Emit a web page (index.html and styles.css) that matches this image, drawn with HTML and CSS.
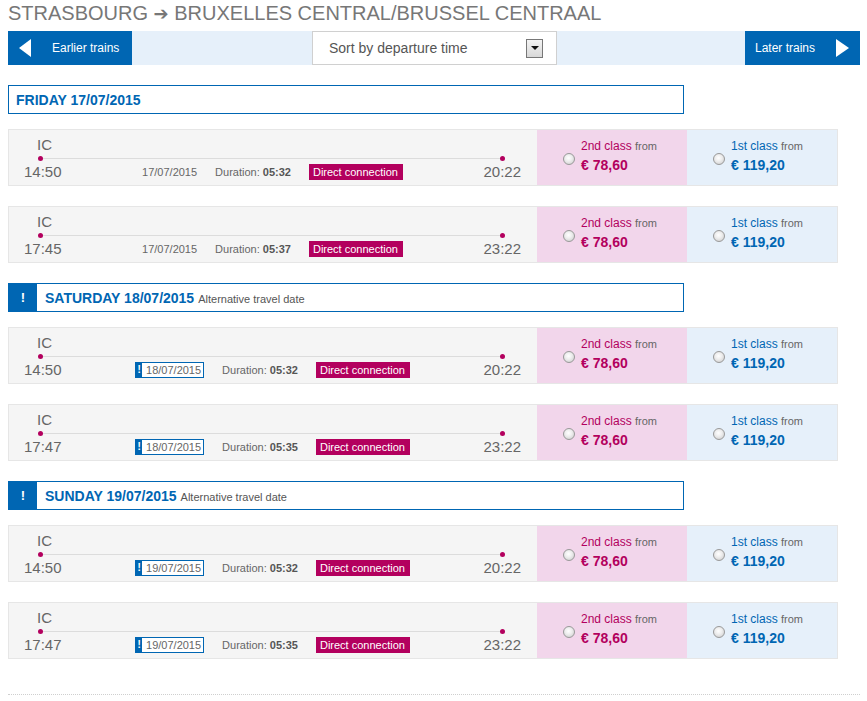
FILE: index.html
```html
<!DOCTYPE html>
<html>
<head>
<meta charset="utf-8">
<link rel="stylesheet" href="styles.css">
</head>
<body>
<div class="page">
  <h1 class="title">STRASBOURG <span class="arrow">➔</span> BRUXELLES CENTRAL/BRUSSEL CENTRAAL</h1>
  <div class="nav">
    <div class="navbtn prev"><span class="tri-left"></span><span>Earlier trains</span></div>
    <div class="navmid">
      <div class="select"><span>Sort by departure time</span><span class="dd"><span class="dd-tri"></span></span></div>
    </div>
    <div class="navbtn next"><span>Later trains</span><span class="tri-right"></span></div>
  </div>

  <div class="day"><span class="dayname">FRIDAY 17/07/2015</span></div>

  <div class="trip">
    <div class="leg">
      <div class="train">IC</div>
      <div class="track"><span class="dot"></span><span class="line"></span><span class="dot"></span></div>
      <div class="times">
        <span class="time">14:50</span>
        <div class="info"><span class="date">17/07/2015</span><span class="dur">Duration: <b>05:32</b></span><span class="direct">Direct connection</span></div>
        <span class="time end">20:22</span>
      </div>
    </div>
    <div class="price second"><span class="radio"></span><div><div class="cls">2nd class <span class="from">from</span></div><div class="amt">€ 78,60</div></div></div>
    <div class="price first"><span class="radio"></span><div><div class="cls">1st class <span class="from">from</span></div><div class="amt">€ 119,20</div></div></div>
  </div>

  <div class="trip">
    <div class="leg">
      <div class="train">IC</div>
      <div class="track"><span class="dot"></span><span class="line"></span><span class="dot"></span></div>
      <div class="times">
        <span class="time">17:45</span>
        <div class="info"><span class="date">17/07/2015</span><span class="dur">Duration: <b>05:37</b></span><span class="direct">Direct connection</span></div>
        <span class="time end">23:22</span>
      </div>
    </div>
    <div class="price second"><span class="radio"></span><div><div class="cls">2nd class <span class="from">from</span></div><div class="amt">€ 78,60</div></div></div>
    <div class="price first"><span class="radio"></span><div><div class="cls">1st class <span class="from">from</span></div><div class="amt">€ 119,20</div></div></div>
  </div>

  <div class="day alt"><span class="bang">!</span><span class="dayname">SATURDAY 18/07/2015</span><span class="altnote">Alternative travel date</span></div>

  <div class="trip">
    <div class="leg">
      <div class="train">IC</div>
      <div class="track"><span class="dot"></span><span class="line"></span><span class="dot"></span></div>
      <div class="times">
        <span class="time">14:50</span>
        <div class="info"><span class="date altdate"><span class="excl">!</span><span class="dtxt">18/07/2015</span></span><span class="dur">Duration: <b>05:32</b></span><span class="direct">Direct connection</span></div>
        <span class="time end">20:22</span>
      </div>
    </div>
    <div class="price second"><span class="radio"></span><div><div class="cls">2nd class <span class="from">from</span></div><div class="amt">€ 78,60</div></div></div>
    <div class="price first"><span class="radio"></span><div><div class="cls">1st class <span class="from">from</span></div><div class="amt">€ 119,20</div></div></div>
  </div>

  <div class="trip">
    <div class="leg">
      <div class="train">IC</div>
      <div class="track"><span class="dot"></span><span class="line"></span><span class="dot"></span></div>
      <div class="times">
        <span class="time">17:47</span>
        <div class="info"><span class="date altdate"><span class="excl">!</span><span class="dtxt">18/07/2015</span></span><span class="dur">Duration: <b>05:35</b></span><span class="direct">Direct connection</span></div>
        <span class="time end">23:22</span>
      </div>
    </div>
    <div class="price second"><span class="radio"></span><div><div class="cls">2nd class <span class="from">from</span></div><div class="amt">€ 78,60</div></div></div>
    <div class="price first"><span class="radio"></span><div><div class="cls">1st class <span class="from">from</span></div><div class="amt">€ 119,20</div></div></div>
  </div>

  <div class="day alt"><span class="bang">!</span><span class="dayname">SUNDAY 19/07/2015</span><span class="altnote">Alternative travel date</span></div>

  <div class="trip">
    <div class="leg">
      <div class="train">IC</div>
      <div class="track"><span class="dot"></span><span class="line"></span><span class="dot"></span></div>
      <div class="times">
        <span class="time">14:50</span>
        <div class="info"><span class="date altdate"><span class="excl">!</span><span class="dtxt">19/07/2015</span></span><span class="dur">Duration: <b>05:32</b></span><span class="direct">Direct connection</span></div>
        <span class="time end">20:22</span>
      </div>
    </div>
    <div class="price second"><span class="radio"></span><div><div class="cls">2nd class <span class="from">from</span></div><div class="amt">€ 78,60</div></div></div>
    <div class="price first"><span class="radio"></span><div><div class="cls">1st class <span class="from">from</span></div><div class="amt">€ 119,20</div></div></div>
  </div>

  <div class="trip">
    <div class="leg">
      <div class="train">IC</div>
      <div class="track"><span class="dot"></span><span class="line"></span><span class="dot"></span></div>
      <div class="times">
        <span class="time">17:47</span>
        <div class="info"><span class="date altdate"><span class="excl">!</span><span class="dtxt">19/07/2015</span></span><span class="dur">Duration: <b>05:35</b></span><span class="direct">Direct connection</span></div>
        <span class="time end">23:22</span>
      </div>
    </div>
    <div class="price second"><span class="radio"></span><div><div class="cls">2nd class <span class="from">from</span></div><div class="amt">€ 78,60</div></div></div>
    <div class="price first"><span class="radio"></span><div><div class="cls">1st class <span class="from">from</span></div><div class="amt">€ 119,20</div></div></div>
  </div>

  <div class="footer-line"></div>
</div>
</body>
</html>
```

FILE: styles.css
```css
* { box-sizing: border-box; }
html, body { margin: 0; padding: 0; background: #fff; }
body { font-family: "Liberation Sans", Arial, sans-serif; color: #666; }
.page { padding: 0 0 0 8px; width: 867px; }

.title {
  margin: 0 0 4px 0;
  font-size: 20px;
  line-height: 26px;
  font-weight: normal;
  color: #777;
  white-space: nowrap;
}
.arrow { font-family: "DejaVu Sans", sans-serif; font-size: 18px; }

.nav {
  display: flex;
  width: 852px;
  height: 34px;
  background: #e6f0fa;
}
.navbtn {
  display: flex;
  align-items: center;
  background: #0066b3;
  color: #fff;
  font-size: 12px;
  height: 34px;
}
.prev { width: 124px; padding-left: 11px; }
.prev .tri-left { margin-right: 21px; }
.next { width: 115px; padding-left: 10px; }
.next .tri-right { margin-left: 21px; }
.tri-left {
  width: 0; height: 0;
  border-top: 9px solid transparent;
  border-bottom: 9px solid transparent;
  border-right: 12px solid #fff;
}
.tri-right {
  width: 0; height: 0;
  border-top: 9px solid transparent;
  border-bottom: 9px solid transparent;
  border-left: 13px solid #fff;
}
.navmid { flex: 1; }
.select {
  margin-left: 180px;
  width: 245px;
  height: 34px;
  background: #fff;
  border: 1px solid #d0d0d0;
  display: flex;
  align-items: center;
  justify-content: space-between;
  padding: 0 13px 0 16px;
  font-size: 14px;
  color: #555;
}
.dd {
  width: 17px; height: 19px;
  border: 1px solid #777;
  background: linear-gradient(#f4f4f4, #d8d8d8);
  display: flex;
  align-items: center;
  justify-content: center;
}
.dd-tri {
  width: 0; height: 0;
  border-left: 4px solid transparent;
  border-right: 4px solid transparent;
  border-top: 4px solid #111;
}

.day {
  margin-top: 20px;
  width: 676px;
  height: 29px;
  border: 1px solid #0066b3;
  display: flex;
  align-items: center;
  padding-left: 7px;
}
.dayname { font-size: 14px; font-weight: bold; color: #0066b3; }
.day.alt { padding-left: 0; }
.bang {
  width: 28px;
  align-self: stretch;
  background: #0066b3;
  color: #fff;
  font-weight: bold;
  font-size: 13px;
  display: flex;
  align-items: center;
  justify-content: center;
  margin-right: 8px;
}
.altnote { font-size: 11px; color: #555; margin-left: 4px; margin-top: 2px; }

.trip {
  margin-top: 20px;
  width: 830px;
  height: 57px;
  border: 1px solid #e6e6e6;
  display: flex;
}
.day + .trip { margin-top: 15px; }
.leg {
  width: 528px;
  background: #f5f5f5;
  padding: 6px 16px 4px 15px;
}
.train { font-size: 15px; line-height: 17px; margin-left: 13px; color: #666; }
.track {
  display: flex;
  align-items: center;
  height: 5px;
  margin: 3px 16px 0 14px;
}
.dot { width: 5px; height: 5px; border-radius: 50%; background: #b3005e; }
.line { flex: 1; height: 1px; background: #dcdcdc; }
.times {
  margin-top: 2px;
  display: grid;
  grid-template-columns: 1fr auto 1fr;
  align-items: center;
  height: 18px;
}
.time { font-size: 15px; line-height: 18px; color: #666; }
.time.end { justify-self: end; }
.info {
  display: flex;
  align-items: center;
  gap: 18px;
  font-size: 11px;
  color: #666;
}
.dur b { color: #555; }
.direct {
  background: #b3005e;
  color: #fff;
  font-size: 11px;
  line-height: 16px;
  height: 16px;
  padding: 0 5px 0 4px;
}
.altdate {
  display: flex;
  height: 16px;
  line-height: 14px;
  border: 1px solid #0066b3;
  background: #fff;
}
.excl {
  width: 6px;
  background: #0066b3;
  color: #fff;
  font-weight: bold;
  font-size: 10px;
  text-align: center;
}
.dtxt { padding: 0 2px 0 4px; }

.price {
  display: flex;
  align-items: flex-start;
  padding: 9px 0 0 26px;
}
.price.second { width: 150px; background: #f2d6eb; color: #b3005e; }
.price.first { width: 150px; background: #e6f0fa; color: #0066b3; }
.radio {
  width: 12px; height: 12px;
  margin: 14px 6px 0 0;
  border-radius: 50%;
  border: 1px solid #999;
  background: radial-gradient(circle at 45% 40%, #fff 0%, #eee 40%, #c8c8c8 100%);
  flex: none;
}
.cls { font-size: 12px; line-height: 14px; }
.from { font-size: 11px; color: #666; }
.amt { font-size: 14px; line-height: 16px; font-weight: bold; margin-top: 4px; }

.footer-line {
  margin-top: 35px;
  width: 852px;
  border-top: 1px dotted #cfcfcf;
}
```
